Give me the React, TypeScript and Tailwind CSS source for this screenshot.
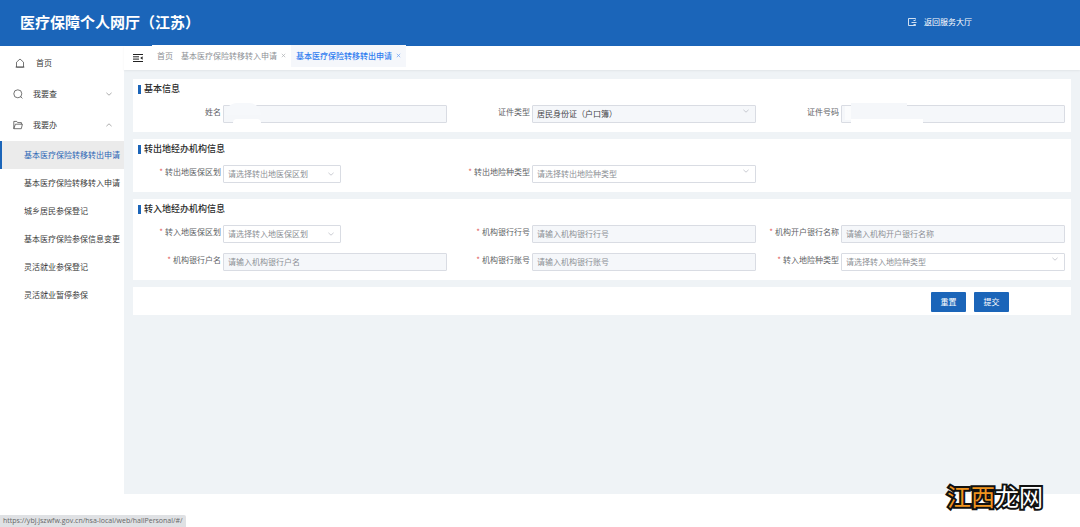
import { useState } from 'react'
import type { ReactNode } from 'react'

type FieldProps = {
  id: string
  label: string
  required?: boolean
  children: ReactNode
}

type ControlProps = {
  id: string
  placeholder?: string
}

type SelectProps = ControlProps & {
  value?: string
  narrow?: boolean
  disabled?: boolean
}

const subMenu = [
  '基本医疗保险转移转出申请',
  '基本医疗保险转移转入申请',
  '城乡居民参保登记',
  '基本医疗保险参保信息变更',
  '灵活就业参保登记',
  '灵活就业暂停参保',
]

const Chevron = ({ up = false, className = '' }: { up?: boolean; className?: string }) => (
  <svg viewBox="0 0 8 8" className={`size-2 ${className}`} fill="none" stroke="currentColor" strokeWidth="0.7">
    <path d={up ? 'M1.4 5.2 4 2.8 6.6 5.2' : 'M1.4 2.8 4 5.2 6.6 2.8'} />
  </svg>
)

const HomeIcon = () => (
  <svg viewBox="0 0 10 10" className="size-2.5" fill="none" stroke="currentColor" strokeWidth="0.7">
    <path d="M1.5 4.2 5 1l3.5 3.2v4.9h-7zM.6 9.1h8.8" />
  </svg>
)

const SearchIcon = () => (
  <svg viewBox="0 0 10 10" className="size-2.5" fill="none" stroke="currentColor" strokeWidth="0.7">
    <circle cx="4.8" cy="4.8" r="4" />
    <path d="m7.6 7.6 1.8 1.8" />
  </svg>
)

const FolderIcon = () => (
  <svg viewBox="0 0 10 10" className="size-2.5" fill="none" stroke="currentColor" strokeWidth="0.7">
    <path d="M.8 8.7V1.4h2.9l1 1.2h3.7v1.6M.8 8.7l1.6-4.5h7L8.3 8.7z" />
  </svg>
)

const ExitIcon = () => (
  <svg viewBox="0 0 10 10" className="size-2.5" fill="none" stroke="currentColor" strokeWidth="0.8">
    <path d="M8.5 2.5v-1h-7v7h7v-1M4.5 5.5h5M6.5 3.5h2M6.5 7.5h2" />
  </svg>
)

const FoldIcon = () => (
  <svg viewBox="0 0 10 10" className="size-2.5" fill="none" stroke="currentColor" strokeWidth="1">
    <path d="M0 1.5h10M0 3.8h6M0 6.1h6M0 8.5h10" />
    <path d="M9.6 3.2v3.6L7.2 5z" fill="currentColor" stroke="none" />
  </svg>
)

const Field = ({ id, label, required, children }: FieldProps) => (
  <div className="flex items-start">
    <label htmlFor={id} className="w-[85px] shrink-0 pr-0.5 text-right leading-[14px] whitespace-nowrap text-[#606266]">
      {required && <span className="mr-0.5 text-[#e05b5b]">*</span>}
      {label}
    </label>
    <div className="relative min-w-0 flex-1">{children}</div>
  </div>
)

const TextInput = ({ id, placeholder }: ControlProps) => (
  <input
    id={id}
    type="text"
    disabled
    placeholder={placeholder}
    className="block h-[18px] w-full rounded-[1px] border border-[#d9dce3] bg-[#f5f7fa] px-1 pb-px placeholder:text-[#8c8f95]"
  />
)

const SelectInput = ({ id, placeholder, value, narrow, disabled }: SelectProps) => (
  <div className={`relative ${narrow ? 'w-[118px]' : 'w-full'}`}>
    <select
      id={id}
      disabled={disabled}
      className={`block h-[18px] w-full appearance-none rounded-[1px] border border-[#d9dce3] px-1 opacity-100 ${
        disabled ? 'bg-[#f5f7fa]' : 'bg-white'
      } ${value ? 'text-[#3f4247]' : 'text-[#8c8f95]'}`}
    >
      <option>{value ?? placeholder}</option>
    </select>
    <Chevron
      className={`pointer-events-none absolute text-[#b4b8c0] ${narrow ? 'top-[5px] right-1.5' : 'top-0.5 right-1.5'}`}
    />
  </div>
)

const Section = ({ title, children }: { title: string; children: ReactNode }) => (
  <section className="bg-white pt-[3px] pr-1.5 pb-[9px] pl-[5px]">
    <h2 className="mb-[9px] flex h-3.5 items-center text-[9px] font-medium text-[#2b2b2b]">
      <span className="mr-[3px] h-[9px] w-[3px] bg-[#1b65b9]" />
      {title}
    </h2>
    <div className="grid grid-cols-3 gap-y-2.5">{children}</div>
  </section>
)

const Sidebar = () => {
  const [open, setOpen] = useState(true)

  return (
    <nav className="w-[124px] shrink-0 bg-white pt-px text-[#3a3a3a]">
      <a href="#home" className="flex h-[31px] items-center pl-[15px]">
        <HomeIcon />
        <span className="ml-[11px]">首页</span>
      </a>
      <button type="button" className="flex h-[31px] w-full items-center pr-[11px] pl-[13px]">
        <SearchIcon />
        <span className="ml-2.5">我要查</span>
        <Chevron className="ml-auto text-[#888]" />
      </button>
      <button
        type="button"
        aria-expanded={open}
        onClick={() => setOpen(!open)}
        className="flex h-[31px] w-full items-center pr-[11px] pl-[13px]"
      >
        <FolderIcon />
        <span className="ml-2.5">我要办</span>
        <Chevron up={open} className="ml-auto text-[#888]" />
      </button>
      {open && (
        <ul className="pt-px">
          {subMenu.map((item, i) => (
            <li key={item}>
              <a
                href={`#apply-${i}`}
                className={`flex h-7 items-center border-l-2 pl-[22px] whitespace-nowrap ${
                  i === 0 ? 'border-[#1b65b9] bg-[#ebebeb] text-[#2a64b5]' : 'border-transparent'
                }`}
              >
                {item}
              </a>
            </li>
          ))}
        </ul>
      )}
    </nav>
  )
}

const CloseButton = () => (
  <button type="button" aria-label="关闭" className="ml-1 opacity-70">
    <svg viewBox="0 0 5 5" className="size-[5px]" fill="none" stroke="currentColor" strokeWidth="0.7">
      <path d="m.8.8 3.4 3.4m0-3.4L.8 4.2" />
    </svg>
  </button>
)

const TabBar = () => (
  <div className="flex h-6 items-start bg-white shadow-[0_1px_2px_rgba(0,0,0,0.06)]">
    <button type="button" aria-label="折叠菜单" className="mt-[7px] mr-[9px] ml-[9px] text-[#222]">
      <FoldIcon />
    </button>
    <div className="-mt-px flex h-[22px] bg-white pb-px text-[#8d9095]">
      <a href="#home" className="flex items-center pr-[3px] pl-[5px]">
        首页
      </a>
      <div className="flex items-center px-[5px]">
        <a href="#apply-1">基本医疗保险转移转入申请</a>
        <CloseButton />
      </div>
      <div className="-mb-px flex items-center bg-[#f5f7fb] px-[5px] pb-px text-[#2f7cf0]">
        <a href="#apply-0" className="font-medium">基本医疗保险转移转出申请</a>
        <CloseButton />
      </div>
    </div>
  </div>
)

export default function App() {
  return (
    <div className="relative flex min-h-screen flex-col bg-white font-['Noto_Sans_CJK_SC',sans-serif] text-[8px] leading-3">
      <header className="flex h-[46px] items-center justify-between bg-[#1b65b9] pr-[108px] pb-0.5 pl-5 text-white">
        <h1 className="text-[15px] font-bold">医疗保障个人网厅（江苏）</h1>
        <a href="#hall" className="flex items-center gap-[7px]">
          <ExitIcon />
          返回服务大厅
        </a>
      </header>

      <div className="flex flex-1">
        <Sidebar />
        <div className="min-w-0 flex-1 bg-[#eff3f6]">
          <TabBar />
          <form className="flex flex-col gap-[7px] p-[9px]">
            <Section title="基本信息">
              <Field id="name" label="姓名">
                <TextInput id="name" />
                <span className="absolute -top-0.5 left-0.5 h-3 w-9 rounded-t-full bg-[#f6f8fb]" />
                <span className="absolute bottom-0 left-2.5 h-1 w-7 rounded-t-full bg-white" />
              </Field>
              <Field id="idType" label="证件类型">
                <SelectInput id="idType" value="居民身份证（户口簿）" disabled />
              </Field>
              <Field id="idNo" label="证件号码">
                <TextInput id="idNo" />
                <span className="absolute top-px left-1 h-3.5 w-1.5 bg-[#fbfcfd]" />
                <span className="absolute -top-0.5 left-2.5 h-3.5 w-14 bg-[#f5f7fa]" />
                <span className="absolute bottom-0 left-2.5 h-1 w-[72px] bg-white" />
              </Field>
            </Section>

            <Section title="转出地经办机构信息">
              <Field id="outArea" label="转出地医保区划" required>
                <SelectInput id="outArea" placeholder="请选择转出地医保区划" narrow />
              </Field>
              <Field id="outType" label="转出地险种类型" required>
                <SelectInput id="outType" placeholder="请选择转出地险种类型" />
              </Field>
            </Section>

            <Section title="转入地经办机构信息">
              <Field id="inArea" label="转入地医保区划" required>
                <SelectInput id="inArea" placeholder="请选择转入地医保区划" narrow />
              </Field>
              <Field id="bankNo" label="机构银行行号" required>
                <TextInput id="bankNo" placeholder="请输入机构银行行号" />
              </Field>
              <Field id="bankName" label="机构开户银行名称" required>
                <TextInput id="bankName" placeholder="请输入机构开户银行名称" />
              </Field>
              <Field id="accountName" label="机构银行户名" required>
                <TextInput id="accountName" placeholder="请输入机构银行户名" />
              </Field>
              <Field id="accountNo" label="机构银行账号" required>
                <TextInput id="accountNo" placeholder="请输入机构银行账号" />
              </Field>
              <Field id="inType" label="转入地险种类型" required>
                <SelectInput id="inType" placeholder="请选择转入地险种类型" />
              </Field>
            </Section>

            <div className="flex justify-end gap-2 bg-white pt-[5px] pr-[62px] pb-[3px] text-white">
              <button type="reset" className="h-5 w-[35px] rounded-[1px] bg-[#1b65b9]">重置</button>
              <button type="button" className="h-5 w-[35px] rounded-[1px] bg-[#1b65b9]">提交</button>
            </div>
          </form>
        </div>
      </div>

      <footer className="flex h-[33px] items-end">
        <span className="rounded-tr-xs bg-[#dfe1e4] px-[3px] font-['Open_Sans',sans-serif] text-[7px] text-[#666]">
          https://ybj.jszwfw.gov.cn/hsa-local/web/hallPersonal/#/
        </span>
      </footer>

      <div className="absolute right-[37px] bottom-[17px] text-2xl leading-7 text-white [-webkit-text-stroke:4px_#111] [paint-order:stroke_fill]">
        <span className="text-[#f0941f]">江西</span>龙网
      </div>
    </div>
  )
}
